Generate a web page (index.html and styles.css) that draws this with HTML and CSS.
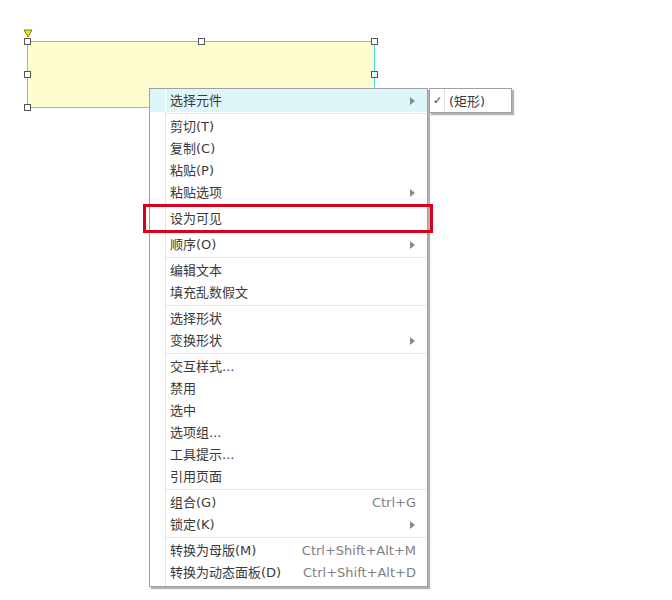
FILE: index.html
```html
<!DOCTYPE html>
<html lang="zh-CN">
<head>
<meta charset="utf-8">
<title>Context menu</title>
<link rel="stylesheet" href="styles.css">
</head>
<body>
<div class="canvas">
  <svg class="anchor" width="10" height="9" viewBox="0 0 10 9"><polygon points="1,1 9,1 5,8" fill="#f2e600" stroke="#7a7a40" stroke-width="1"/></svg>
  <div class="shape">
    <span class="handle h-tl"></span>
    <span class="handle h-tm"></span>
    <span class="handle h-tr"></span>
    <span class="handle h-ml"></span>
    <span class="handle h-mr"></span>
    <span class="handle h-bl"></span>
  </div>

  <div class="menu">
    <div class="item active"><span class="label">选择元件</span><span class="arrow"></span></div>
    <div class="sep"></div>
    <div class="item"><span class="label">剪切(T)</span></div>
    <div class="item"><span class="label">复制(C)</span></div>
    <div class="item"><span class="label">粘贴(P)</span></div>
    <div class="item"><span class="label">粘贴选项</span><span class="arrow"></span></div>
    <div class="sep"></div>
    <div class="item"><span class="label">设为可见</span></div>
    <div class="sep"></div>
    <div class="item"><span class="label">顺序(O)</span><span class="arrow"></span></div>
    <div class="sep"></div>
    <div class="item"><span class="label">编辑文本</span></div>
    <div class="item"><span class="label">填充乱数假文</span></div>
    <div class="sep"></div>
    <div class="item"><span class="label">选择形状</span></div>
    <div class="item"><span class="label">变换形状</span><span class="arrow"></span></div>
    <div class="sep"></div>
    <div class="item"><span class="label">交互样式...</span></div>
    <div class="item"><span class="label">禁用</span></div>
    <div class="item"><span class="label">选中</span></div>
    <div class="item"><span class="label">选项组...</span></div>
    <div class="item"><span class="label">工具提示...</span></div>
    <div class="item"><span class="label">引用页面</span></div>
    <div class="sep"></div>
    <div class="item"><span class="label">组合(G)</span><span class="key">Ctrl+G</span></div>
    <div class="item"><span class="label">锁定(K)</span><span class="arrow"></span></div>
    <div class="sep"></div>
    <div class="item"><span class="label">转换为母版(M)</span><span class="key">Ctrl+Shift+Alt+M</span></div>
    <div class="item"><span class="label">转换为动态面板(D)</span><span class="key">Ctrl+Shift+Alt+D</span></div>
  </div>

  <div class="submenu">
    <div class="sub-item"><span class="check">✓</span><span class="sub-label">(矩形)</span></div>
  </div>

  <div class="highlight"></div>
</div>
</body>
</html>
```
FILE: styles.css
```css
html, body {
  margin: 0;
  padding: 0;
  background: #ffffff;
}
body {
  font-family: "DejaVu Sans", "Noto Sans CJK SC", sans-serif;
  font-size: 13px;
  color: #3a3a3a;
}
.canvas {
  position: relative;
  width: 672px;
  height: 600px;
  overflow: hidden;
}
.anchor {
  position: absolute;
  left: 23px;
  top: 29px;
}
.shape {
  position: absolute;
  left: 27px;
  top: 41px;
  width: 346px;
  height: 65px;
  background: #fefdd0;
  border: 1px solid #3fe0d8;
}
.handle {
  position: absolute;
  width: 5px;
  height: 5px;
  background: #ffffff;
  border: 1px solid #555555;
}
.h-tl { left: -4px; top: -4px; }
.h-tm { left: 170px; top: -4px; }
.h-tr { right: -4px; top: -4px; }
.h-ml { left: -4px; top: 29px; }
.h-mr { right: -4px; top: 29px; }
.h-bl { left: -4px; bottom: -4px; }

.menu {
  position: absolute;
  left: 149px;
  top: 88px;
  width: 277px;
  background: #ffffff;
  border: 1px solid #a0a0a0;
  box-shadow: 2px 2px 1px rgba(0, 0, 0, 0.3);
  padding-bottom: 2px;
  background-image: linear-gradient(#e2e2e2, #e2e2e2);
  background-size: 1px 100%;
  background-position: 15px 0;
  background-repeat: no-repeat;
}
.item {
  display: flex;
  align-items: center;
  height: 22px;
  padding: 0 11px 0 20px;
  line-height: 22px;
}
.item.active {
  height: 23px;
  background: #def6f7 linear-gradient(#ffffff, #ffffff) no-repeat 15px 0 / 1px 100%;
}
.label {
  flex: 1;
  white-space: nowrap;
}
.key {
  color: #808080;
  white-space: nowrap;
}
.arrow {
  width: 0;
  height: 0;
  border-top: 4px solid transparent;
  border-bottom: 4px solid transparent;
  border-left: 5px solid #8a8a8a;
  margin-right: 1px;
}
.sep {
  height: 1px;
  margin: 1px 0 2px 16px;
  background: #e6e6e6;
}

.submenu {
  position: absolute;
  left: 429px;
  top: 88px;
  width: 81px;
  background: #ffffff linear-gradient(#e2e2e2, #e2e2e2) no-repeat 14px 0 / 1px 100%;
  border: 1px solid #a0a0a0;
  box-shadow: 2px 2px 1px rgba(0, 0, 0, 0.3);
}
.sub-item {
  display: flex;
  align-items: center;
  height: 23px;
}
.check {
  width: 15px;
  text-align: center;
  font-size: 11px;
  color: #444444;
}
.sub-label {
  padding-left: 4px;
  white-space: nowrap;
}

.highlight {
  position: absolute;
  left: 143px;
  top: 204px;
  width: 284px;
  height: 23px;
  border: 3px solid #d7001c;
}
```
